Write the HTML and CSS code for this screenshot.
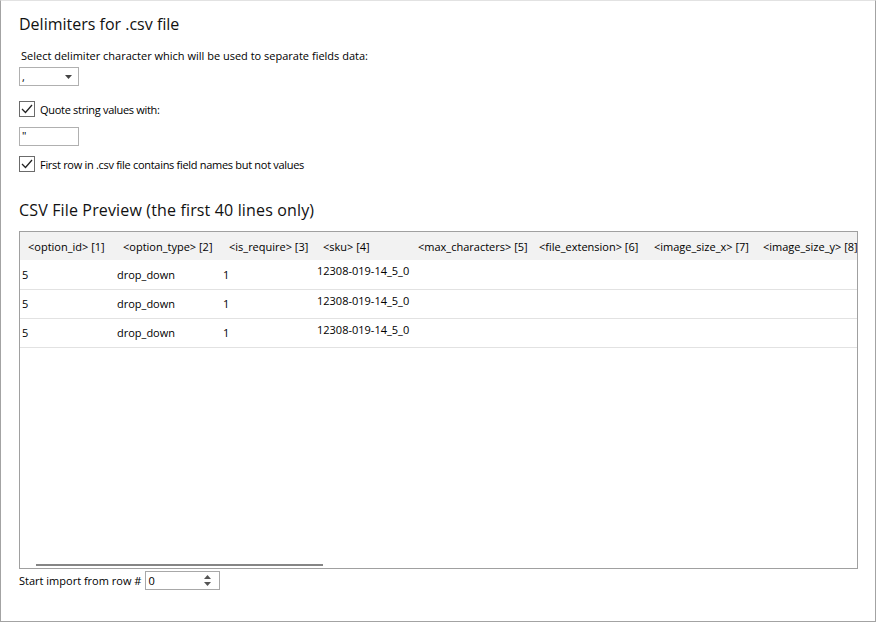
FILE: index.html
```html
<!DOCTYPE html>
<html lang="en">
<head>
    <meta charset="UTF-8">
    <title>Delimiters for .csv file</title>
    <link rel="stylesheet" href="styles.css">
</head>
<body>
<div class="frame">
    <h2 class="title">Delimiters for .csv file</h2>
    <div class="label">Select delimiter character which will be used to separate fields data:</div>
    <div class="combo">
        <span class="comboValue">,</span>
        <svg class="comboArrow" width="7" height="4" viewBox="0 0 7 4"><path d="M0 0h7L3.5 4z" fill="#444"/></svg>
    </div>
    <label class="check">
        <span class="box"><svg width="12" height="10" viewBox="0 0 12 10"><path d="M1 5l3.5 3.5L11 1" fill="none" stroke="#222" stroke-width="1.3"/></svg></span>
        <span class="checkText">Quote string values with:</span>
    </label>
    <div class="textBox">"</div>
    <label class="check">
        <span class="box"><svg width="12" height="10" viewBox="0 0 12 10"><path d="M1 5l3.5 3.5L11 1" fill="none" stroke="#222" stroke-width="1.3"/></svg></span>
        <span class="checkText">First row in .csv file contains field names but not values</span>
    </label>

    <h2 class="title previewTitle">CSV File Preview (the first 40 lines only)</h2>
    <div class="grid">
        <table>
            <colgroup>
                <col class="c1"><col class="c2"><col class="c3"><col class="c4">
                <col class="c5"><col class="c6"><col class="c7"><col class="c8">
            </colgroup>
            <thead>
                <tr>
                    <th>&lt;option_id&gt; [1]</th>
                    <th>&lt;option_type&gt; [2]</th>
                    <th>&lt;is_require&gt; [3]</th>
                    <th>&lt;sku&gt; [4]</th>
                    <th>&lt;max_characters&gt; [5]</th>
                    <th>&lt;file_extension&gt; [6]</th>
                    <th>&lt;image_size_x&gt; [7]</th>
                    <th>&lt;image_size_y&gt; [8]</th>
                </tr>
            </thead>
            <tbody>
                <tr><td>5</td><td>drop_down</td><td>1</td><td class="top">12308-019-14_5_0</td><td></td><td></td><td></td><td></td></tr>
                <tr><td>5</td><td>drop_down</td><td>1</td><td class="top">12308-019-14_5_0</td><td></td><td></td><td></td><td></td></tr>
                <tr><td>5</td><td>drop_down</td><td>1</td><td class="top">12308-019-14_5_0</td><td></td><td></td><td></td><td></td></tr>
            </tbody>
        </table>
        <div class="hScroll"></div>
    </div>

    <div class="startRow">
        <span>Start import from row #</span>
        <div class="spin">
            <span>0</span>
            <svg class="spinArrows" width="7" height="11" viewBox="0 0 7 11"><path d="M0 4L3.5 0L7 4z" fill="#555"/><path d="M0 7h7L3.5 11z" fill="#555"/></svg>
        </div>
    </div>
</div>
</body>
</html>
```

FILE: styles.css
```css
*{
    padding:0px;
    margin:0px;
    box-sizing: border-box;
}
body{
    background-color: #fff;
    font-family: "Open Sans", "Noto Sans", sans-serif;
    font-size: 11px;
    color: #000;
}
.frame{
    position: relative;
    width:876px;
    height:622px;
    border:1px solid #a3a3a3;
    border-top-color: #e2e2e2;
    padding:12px 0px 0px 18px;
}
.title{
    font-size: 16px;
    font-weight: normal;
    line-height: 22px;
    height:22px;
    color:#111;
}
.label{
    margin-top:13px;
    padding-left:2px;
    line-height: 16px;
    height:16px;
}
.combo{
    margin-top:3px;
    width:60px;
    height:19px;
    border:1px solid #b0b0b0;
    display: flex;
    align-items: center;
    justify-content: space-between;
    padding:0px 6px 0px 2px;
}
.comboValue{
    line-height: 17px;
}
.check{
    display: flex;
    align-items: center;
    gap:5px;
    height:16px;
    margin-top:15px;
}
.check .box{
    width:16px;
    height:16px;
    border:1px solid #6b6b6b;
    display: flex;
    align-items: center;
    justify-content: center;
}
.checkText{
    letter-spacing: -0.3px;
    line-height: 15px;
}
.textBox{
    margin-top:10px;
    width:60px;
    height:19px;
    border:1px solid #b0b0b0;
    padding-left:2px;
    line-height: 15px;
}
.textBox + .check{
    margin-top:10px;
}
.previewTitle{
    margin-top:27px;
    letter-spacing: 0.15px;
}
.grid{
    position: relative;
    margin-top:10px;
    width:839px;
    height:338px;
    border:1px solid #a0a0a0;
    overflow: hidden;
}
.grid table{
    border-collapse: collapse;
    table-layout: fixed;
    width:862px;
}
.grid .c1{ width:95px; }
.grid .c2{ width:106px; }
.grid .c3{ width:94px; }
.grid .c4{ width:95px; }
.grid .c5{ width:121px; }
.grid .c6{ width:115px; }
.grid .c7{ width:109px; }
.grid .c8{ width:127px; }
.grid th{
    height:28px;
    background-color: #f2f2f2;
    font-weight: normal;
    text-align: left;
    padding-left:8px;
    white-space: nowrap;
    overflow: hidden;
}
.grid td{
    height:29px;
    border-bottom:1px solid #e2e2e2;
    padding:0px 0px 0px 2px;
    white-space: nowrap;
}
.grid td.top{
    vertical-align: top;
    padding-top:3px;
}
.hScroll{
    position: absolute;
    left:16px;
    bottom:2px;
    width:287px;
    height:2px;
    background-color: #858585;
}
.startRow{
    display: flex;
    align-items: center;
    gap:4px;
    margin-top:2px;
    height:19px;
}
.spin{
    width:75px;
    height:19px;
    border:1px solid #a8a8a8;
    display: flex;
    align-items: center;
    justify-content: space-between;
    padding:0px 8px 0px 2px;
}
```
